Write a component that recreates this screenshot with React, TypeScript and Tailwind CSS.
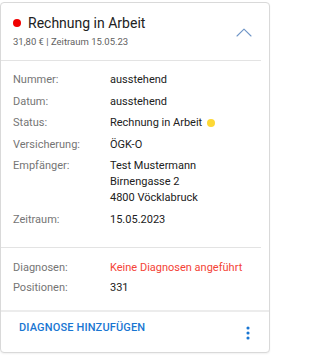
import React from "react";

type Row = {
  label: string;
  value: React.ReactNode;
};

const ChevronUp = () => (
  <svg width="16" height="9" viewBox="0 0 16 9" fill="none">
    <polyline
      points="1,8 8,1.2 15,8"
      stroke="#6f95c7"
      strokeWidth="1.1"
      strokeLinecap="round"
      strokeLinejoin="round"
    />
  </svg>
);

const MoreVertical = () => (
  <svg width="4" height="14" viewBox="0 0 4 14" fill="#1976d2">
    <circle cx="2" cy="2" r="1.55" />
    <circle cx="2" cy="7" r="1.55" />
    <circle cx="2" cy="12" r="1.55" />
  </svg>
);

const DetailRow = ({ label, value }: Row) => (
  <div className="flex text-[11px] leading-4">
    <div className="w-[97px] shrink-0 text-[#757575]">{label}</div>
    <div className="text-[#212121]">{value}</div>
  </div>
);

const App = () => {
  const rows: Row[] = [
    { label: "Nummer:", value: "ausstehend" },
    { label: "Datum:", value: "ausstehend" },
    {
      label: "Status:",
      value: (
        <span className="flex items-center gap-[5px]">
          Rechnung in Arbeit
          <span className="inline-block w-2 h-2 rounded-full bg-[#fdd835]" />
        </span>
      ),
    },
    { label: "Versicherung:", value: "ÖGK-O" },
    {
      label: "Empfänger:",
      value: (
        <>
          <div>Test Mustermann</div>
          <div>Birnengasse 2</div>
          <div>4800 Vöcklabruck</div>
        </>
      ),
    },
    { label: "Zeitraum:", value: "15.05.2023" },
  ];

  return (
    <div
      className="pt-[2px] bg-white min-h-screen"
      style={{ fontFamily: "Roboto, 'Liberation Sans', sans-serif" }}
    >
      <div className="w-[270px] h-[351px] flex flex-col bg-white border border-[#d9d9d9] rounded-[4px] shadow-[0_1px_2px_rgba(0,0,0,0.06)]">
        {/* header */}
        <div className="flex items-center justify-between pl-[12px] pr-[17px] pt-[11px] pb-[12px]">
          <div className="flex flex-col gap-[4px]">
            <div className="flex items-center gap-[7px]">
              <span className="w-2 h-2 rounded-full bg-[#f00000]" />
              <span className="text-[14px] leading-[18px] text-[#212121]">
                Rechnung in Arbeit
              </span>
            </div>
            <div className="text-[9.5px] leading-[12px] text-[#616161]">
              31,80 € | Zeitraum 15.05.23
            </div>
          </div>
          <button className="mt-[3px]">
            <ChevronUp />
          </button>
        </div>

        <div className="h-px bg-[#e3e3e3] mr-2" />

        {/* details */}
        <div className="flex flex-col gap-[5.5px] pl-[12px] pt-[11px] pb-[19px]">
          {rows.map((r) => (
            <DetailRow key={r.label} label={r.label} value={r.value} />
          ))}
        </div>

        <div className="h-px bg-[#e3e3e3] mr-2" />

        <div className="flex flex-col gap-1 pl-[12px] pt-[12px] pb-[14px]">
          <DetailRow
            label="Diagnosen:"
            value={<span className="text-[#f44336]">Keine Diagnosen angeführt</span>}
          />
          <DetailRow label="Positionen:" value="331" />
        </div>

        <div className="h-[2px] bg-[#ececec]" />

        {/* footer */}
        <div className="flex items-start justify-between pl-[12px] pr-[19px] pt-[8px]">
          <button className="px-[6px] text-[11px] leading-4 font-medium tracking-[0.15px] text-[#1976d2]">
            DIAGNOSE HINZUFÜGEN
          </button>
          <button className="mt-[6px]">
            <MoreVertical />
          </button>
        </div>
      </div>
    </div>
  );
};

export default App;
